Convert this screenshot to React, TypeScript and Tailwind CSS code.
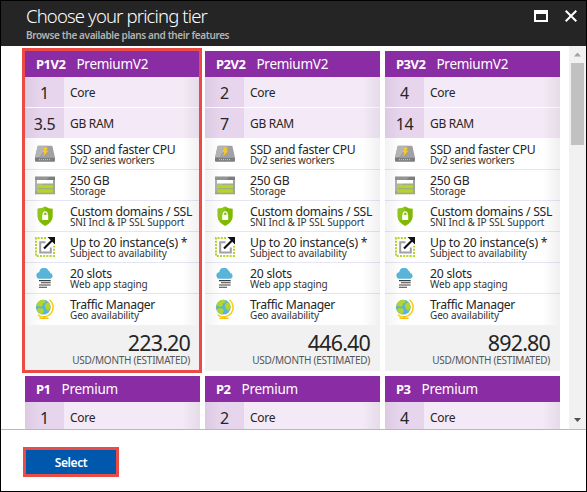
import type { ReactNode } from "react";

type Feature = { title: string; note: string; icon: ReactNode; titleClass: string; noteClass: string };
type Plan = { code: string; name: string; cores: string; ram?: string; price?: string };

const plans: Plan[] = [
  { code: "P1V2", name: "PremiumV2", cores: "1", ram: "3.5", price: "223.20" },
  { code: "P2V2", name: "PremiumV2", cores: "2", ram: "7", price: "446.40" },
  { code: "P3V2", name: "PremiumV2", cores: "4", ram: "14", price: "892.80" },
  { code: "P1", name: "Premium", cores: "1" },
  { code: "P2", name: "Premium", cores: "2" },
  { code: "P3", name: "Premium", cores: "4" },
];

const DiskIcon = () => (
  <svg width="20" height="20" viewBox="0 0 20 20">
    <path d="M3.500 1.700h13q.8 0 1 .8L20 13.800H0L2.500 2.500q.2-.8 1-.8z" fill="#a0a1a2" />
    <path d="M3.500 1.700h8.500L4 13.800H0L2.500 2.500q.2-.8 1-.8z" fill="#b3b4b5" />
    <path d="M0 13.500h20v3.200q0 1-1 1H1q-1 0-1-1z" fill="#7c7d7f" />
    <path d="M4 15.600h12" stroke="#c4c4c4" strokeWidth="1.200" strokeDasharray="1 1" />
    <path d="M9.500 3.500h3.500L11.200 6.800h2.200l-5.400 5.700 1.400-4.200H7.500z" fill="#fcc81b" />
  </svg>
);

const StorageIcon = () => (
  <svg width="20" height="20" viewBox="0 0 20 20">
    <path d="M0 1.700h20v17.600H0z" fill="#a0a1a2" />
    <path d="M0 1.700h20V5H0z" fill="#7c7d7f" />
    <path d="M0 1.700h14.500L0 17z" fill="#fff" opacity=".18" />
    <path d="M2 5h16v3.500H2z" fill="#fff" />
    <path d="M2 9.700h16v3.600H2zM2 14.300h16v3.500H2z" fill="#b4d52b" />
  </svg>
);

const ShieldIcon = () => (
  <svg width="20" height="20" viewBox="0 0 20 20">
    <path d="M10.200.4q3.300 2.400 7.500 2.400v7.700Q17.700 16 10.200 20 2.700 16 2.700 10.500V2.800q4.200 0 7.500-2.400z" fill="#7fba00" />
    <path d="M10.200.4v9.600L4.500 15.500Q2.700 13 2.700 10.500V2.800q4.200 0 7.500-2.400z" fill="#8fc71e" />
    <path d="M7.200 8.800h6v5.200h-6z" fill="#fff" />
    <path d="M8.300 9V7.700a1.900 1.900 0 0 1 3.800 0V9" fill="none" stroke="#fff" strokeWidth="1.200" />
  </svg>
);

const ScaleIcon = () => (
  <svg width="20" height="20" viewBox="0 0 20 20">
    <path d="M11 1H1v18h18V9" fill="none" stroke="#b4d52b" strokeWidth="2" strokeDasharray="2 1.200" />
    <path d="M10.500 5.200H5.200v10.300h10.600v-5" fill="none" stroke="#a0a1a2" strokeWidth="2" />
    <path d="M9 11.500 17 3.500" stroke="#111" strokeWidth="2.200" />
    <path d="M12.500 0H20v7.500z" fill="#111" />
  </svg>
);

const CloudIcon = () => (
  <svg width="20" height="20" viewBox="0 0 20 20">
    <path d="M4 10.700A3.300 3.300 0 0 1 4.200 4.200 4.900 4.900 0 0 1 13.600 2.800Q15.300 3.800 15.200 5.100A2.900 2.900 0 0 1 15.700 10.700z" fill="#59b4d9" />
    <path d="M4 12.600h11.700M6 14.800h9.700M4 17h11.700M4 19.300h8" stroke="#3e3e3e" strokeWidth="1.100" />
  </svg>
);

const GlobeIcon = () => (
  <svg width="20" height="20" viewBox="0 0 20 20">
    <path d="M14.500.8A9.400 9.400 0 0 1 2.800 15.800" fill="none" stroke="#fcd116" strokeWidth="1.700" />
    <circle cx="8.300" cy="8.200" r="7.400" fill="#59b4d9" />
    <path d="M3 3.200Q6 .6 9 .9L11 2 9.500 4 8 4.500 7.500 7 5 8 3 6.500 1.100 8Q1.300 5 3 3.200zM11 4l3-.5q2 2.500 1.600 5.500L13 12 10.500 9 9.800 6zM3.500 9l4 .5 1.500 2L7 15.400Q3 14.300 1.500 11z" fill="#b4d52b" />
    <path d="M9.500 17v2M4.500 19.300h9" stroke="#f5bd16" strokeWidth="1.400" />
  </svg>
);

const features: Feature[] = [
  { title: "SSD and faster CPU", note: "Dv2 series workers", icon: <DiskIcon />, titleClass: "tracking-[-0.3px]", noteClass: "tracking-[-0.25px]" },
  { title: "250 GB", note: "Storage", icon: <StorageIcon />, titleClass: "tracking-[-0.25px]", noteClass: "tracking-[-0.15px]" },
  { title: "Custom domains / SSL", note: "SNI Incl & IP SSL Support", icon: <ShieldIcon />, titleClass: "tracking-[-0.28px]", noteClass: "tracking-[-0.12px]" },
  { title: "Up to 20 instance(s) *", note: "Subject to availability", icon: <ScaleIcon />, titleClass: "tracking-[-0.25px]", noteClass: "tracking-[-0.1px]" },
  { title: "20 slots", note: "Web app staging", icon: <CloudIcon />, titleClass: "tracking-[-0.23px]", noteClass: "tracking-[-0.1px]" },
  { title: "Traffic Manager", note: "Geo availability", icon: <GlobeIcon />, titleClass: "tracking-[-0.33px]", noteClass: "tracking-[-0.15px]" },
];

function Spec({ value, label }: { value: string; label: string }) {
  return (
    <div className="flex h-[31px] border-b border-white bg-[#f4e9f6]">
      <div className="w-[39px] bg-[#e7d5ed] text-center text-[16px] leading-[32px] tracking-[-0.3px]">{value}</div>
      <div className="pl-[6px] text-[12px] leading-[32px] tracking-[-0.3px]">{label}</div>
    </div>
  );
}

function Card({ plan, selected }: { plan: Plan; selected?: boolean }) {
  return (
    <div className="relative w-[175px] bg-white">
      <div className="flex h-[26px] bg-[#8a2ca3] pl-[11px] leading-[26px] text-white">
        <span className="text-[13px] font-bold tracking-[-0.5px]">{plan.code}</span>
        <span className="ml-[11px] text-[13.500px] tracking-[-0.25px]">{plan.name}</span>
      </div>
      <div className="relative">
        <Spec value={plan.cores} label="Core" />
        {plan.ram && <Spec value={plan.ram} label="GB RAM" />}
        {plan.price &&
          features.map((f) => (
            <div key={f.title} className="flex h-[31px] border-b border-[#e6e5f3] pl-[10px] nth-[8]:border-white">
              <div className="mt-[5px] size-5">{f.icon}</div>
              <div className="ml-[15px] whitespace-nowrap">
                <div className={`mt-[4px] h-[12px] text-[12.200px] leading-[13px] ${f.titleClass}`}>{f.title}</div>
                <div className={`text-[10px] leading-[11px] text-[#333] ${f.noteClass}`}>{f.note}</div>
              </div>
            </div>
          ))}
        <div className="pointer-events-none absolute inset-0 bg-[linear-gradient(90deg,rgba(0,0,0,.05),transparent_16px,transparent_157px,rgba(0,0,0,.06))]" />
      </div>
      {plan.price && (
        <div className="h-[46px] bg-[#f1f1f1] pr-[10px] text-right">
          <div className="h-[28px] pt-[4px] text-[21.500px] leading-[28px] tracking-[-0.85px]">{plan.price}</div>
          <div className="text-[10px] leading-[15px] tracking-[-0.25px] text-[#555]">USD/MONTH (ESTIMATED)</div>
        </div>
      )}
      {selected && <div className="absolute -top-[3px] -left-[3px] h-[325px] w-[180px] border-[3px] border-[#eb4b44]" />}
    </div>
  );
}

export default function App() {
  return (
    <div className="flex h-[492px] w-[587px] flex-col overflow-hidden border border-black bg-white font-['Noto_Sans','Open_Sans',sans-serif] text-[#252525]">
      <header className="flex h-[45px] shrink-0 justify-between bg-[#252525] pl-[25px] text-white">
        <div className="whitespace-nowrap">
          <h1 className="mt-[2px] h-[26px] text-[18.500px] leading-[26px] font-light tracking-[-0.86px]">Choose your pricing tier</h1>
          <p className="text-[10px] leading-[12px] font-semibold tracking-[-0.38px] text-[#b3b3b3]">Browse the available plans and their features</p>
        </div>
        <div className="flex gap-[17px] pt-[9px] pr-[9px]">
          <div className="h-[12px] w-[14px] border-2 border-t-4 border-white" />
          <svg width="12" height="12" viewBox="0 0 12 12">
            <path d="m.7.7 10.600 10.600M11.300.7.7 11.300" stroke="#fff" strokeWidth="2" />
          </svg>
        </div>
      </header>
      <main className="flex h-[383px] shrink-0 justify-between overflow-hidden">
        <div className="grid h-[383px] grid-cols-[175px_175px_175px] content-start gap-[5px] pt-[5px] pl-[24px]">
          {plans.map((p, i) => (
            <Card key={p.code} plan={p} selected={i === 0} />
          ))}
        </div>
        <div className="flex w-[17px] flex-col items-center bg-[#f1f1f1]">
          <svg width="17" height="17" viewBox="0 0 17 17"><path d="m5 10.500 3.500-4 3.500 4z" fill="#a3a3a3" /></svg>
          <div className="h-[82px] w-[13px] bg-[#c1c1c1]" />
          <svg className="mt-auto" width="17" height="17" viewBox="0 0 17 17"><path d="m5 6 3.500 4L12 6z" fill="#505050" /></svg>
        </div>
      </main>
      <footer className="grow border-t border-[#b9b9b9] pt-[17px] pl-[22px]">
        <button className="block h-[30px] w-[96px] border-[3px] border-[#eb4b44] bg-[#0058ad] text-[12px] leading-[25px] font-semibold tracking-[-0.4px] text-white">Select</button>
      </footer>
    </div>
  );
}
